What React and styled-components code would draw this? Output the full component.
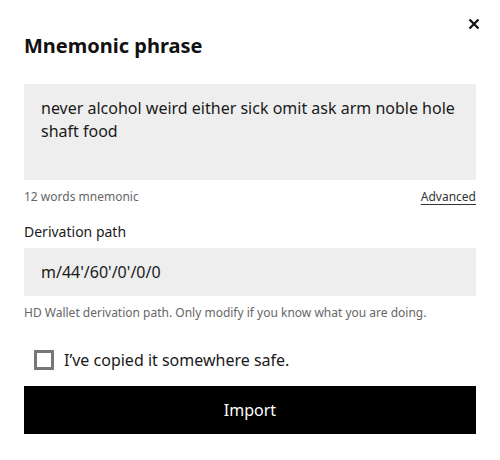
import React from 'react';
import styled, { createGlobalStyle } from 'styled-components';

const GlobalStyle = createGlobalStyle`
  body {
    margin: 0;
    background: #fff;
    font-family: "Noto Sans", "Open Sans", sans-serif;
    color: #111;
  }
`;

const Modal = styled.div`
  width: 500px;
  height: 460px;
  box-sizing: border-box;
  padding: 28px 24px 0;
  position: relative;
  display: flex;
  flex-direction: column;
`;

const CloseButton = styled.button`
  position: absolute;
  top: 16px;
  right: 18px;
  width: 16px;
  height: 16px;
  padding: 0;
  border: none;
  background: none;
  display: flex;
  align-items: center;
  justify-content: center;
  cursor: pointer;
`;

const Title = styled.h2`
  margin: 0 0 20px;
  font-size: 20px;
  line-height: 36px;
  font-weight: 700;
  color: #111;
`;

const Phrase = styled.div`
  background: #eeeeee;
  height: 96px;
  box-sizing: border-box;
  padding: 13px 17px;
  font-size: 16px;
  line-height: 23px;
  color: #1a1a1a;
`;

const Meta = styled.div`
  display: flex;
  justify-content: space-between;
  align-items: center;
  margin-top: 8px;
  font-size: 12px;
  line-height: 18px;
`;

const Hint = styled.span`
  color: #666;
`;

const LinkButton = styled.a`
  color: #333;
  text-decoration: underline;
  text-underline-offset: 3px;
  cursor: pointer;
`;

const Label = styled.div`
  margin-top: 16px;
  font-size: 14px;
  line-height: 20px;
  color: #1a1a1a;
`;

const PathInput = styled.div`
  margin-top: 6px;
  background: #eeeeee;
  height: 48px;
  display: flex;
  align-items: center;
  padding: 0 17px;
  font-size: 16px;
  color: #1a1a1a;
`;

const Help = styled.div`
  margin-top: 8px;
  font-size: 12px;
  line-height: 18px;
  color: #666;
`;

const CheckRow = styled.label`
  display: flex;
  align-items: center;
  gap: 10px;
  margin: 27px 0 0 10px;
  font-size: 16px;
  line-height: 22px;
  color: #1a1a1a;
  cursor: pointer;
`;

const Box = styled.span`
  width: 20px;
  height: 20px;
  box-sizing: border-box;
  border: 3px solid #777;
`;

const PrimaryButton = styled.button`
  margin-top: 15px;
  height: 48px;
  border: none;
  background: #000;
  color: #fff;
  font-family: inherit;
  font-size: 16px;
  cursor: pointer;
`;

const App = () => (
  <>
    <GlobalStyle />
    <Modal>
      <CloseButton aria-label="Close">
        <svg width="12" height="12" viewBox="0 0 12 12">
          <path d="M1.5 1.5L10.5 10.5M10.5 1.5L1.5 10.5" stroke="#111" strokeWidth="2.2" />
        </svg>
      </CloseButton>
      <Title>Mnemonic phrase</Title>
      <Phrase>never alcohol weird either sick omit ask arm noble hole shaft food</Phrase>
      <Meta>
        <Hint>12 words mnemonic</Hint>
        <LinkButton>Advanced</LinkButton>
      </Meta>
      <Label>Derivation path</Label>
      <PathInput>m/44'/60'/0'/0/0</PathInput>
      <Help>HD Wallet derivation path. Only modify if you know what you are doing.</Help>
      <CheckRow>
        <Box />
        I’ve copied it somewhere safe.
      </CheckRow>
      <PrimaryButton>Import</PrimaryButton>
    </Modal>
  </>
);

export default App;
